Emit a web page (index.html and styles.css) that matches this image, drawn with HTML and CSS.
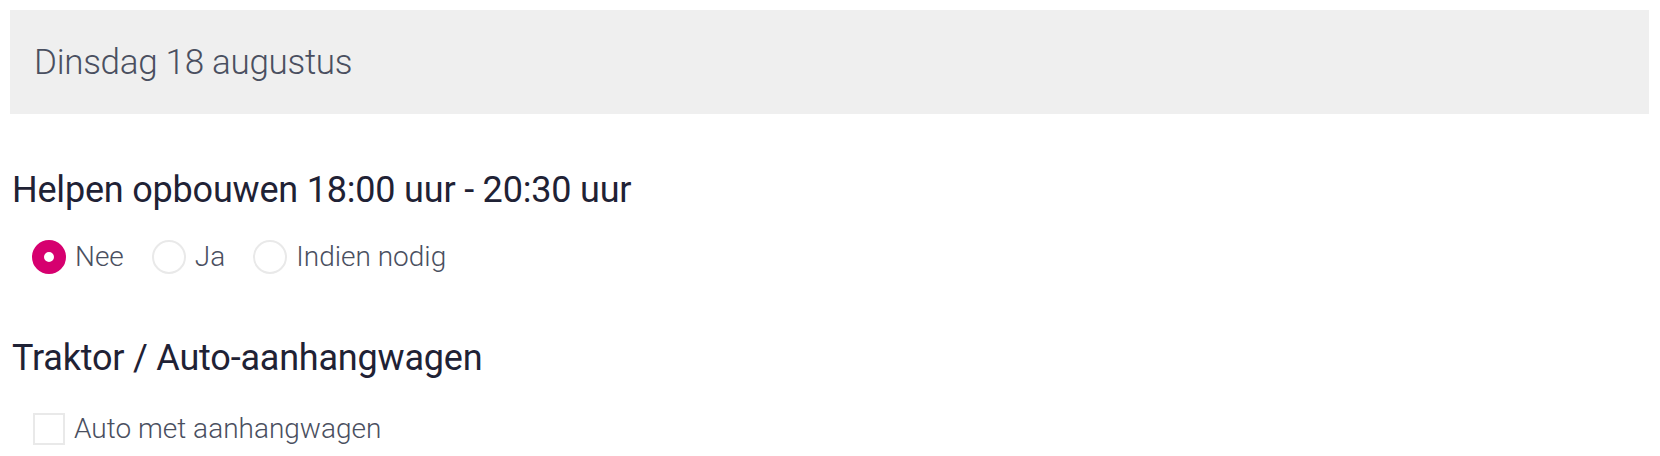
FILE: index.html
```html
<!DOCTYPE html>
<html lang="nl">
<head>
  <meta charset="UTF-8">
  <meta name="viewport" content="width=device-width, initial-scale=1.0">
  <title>Aanmelden vrijwilligers</title>
  <link rel="stylesheet" href="styles.css">
</head>
<body>
  <div class="day-header">Dinsdag 18 augustus</div>

  <div class="question">
    <h2>Helpen opbouwen 18:00 uur - 20:30 uur</h2>
    <div class="options">
      <label class="option"><input type="radio" name="opbouwen" value="nee" checked> Nee</label>
      <label class="option"><input type="radio" name="opbouwen" value="ja"> Ja</label>
      <label class="option"><input type="radio" name="opbouwen" value="nodig"> Indien nodig</label>
    </div>
  </div>

  <div class="question">
    <h2>Traktor / Auto-aanhangwagen</h2>
    <div class="options">
      <label class="option"><input type="checkbox" name="aanhangwagen"> Auto met aanhangwagen</label>
    </div>
  </div>
</body>
</html>
```

FILE: styles.css
```css
body {
  font-family: 'Roboto', 'Liberation Sans', sans-serif;
  background-color: #fff;
  margin: 10px 11px 10px 10px;
}

.day-header {
  background-color: #efefef;
  height: 104px;
  padding-left: 24px;
  display: flex;
  align-items: center;
  font-size: 35px;
  font-weight: 300;
  letter-spacing: -0.3px;
  color: #4a4f60;
}

.question {
  margin-top: 54px;
}

.question + .question {
  margin-top: 62px;
}

.question h2 {
  margin: 0 0 28px 2px;
  font-size: 36px;
  font-weight: 400;
  letter-spacing: -0.2px;
  line-height: 44px;
  color: #1f2235;
}

.question + .question h2 {
  margin-bottom: 32px;
}

.options {
  display: flex;
  gap: 28px;
  padding-left: 22px;
}

.option {
  display: flex;
  align-items: center;
  gap: 9px;
  font-size: 28px;
  line-height: 34px;
  font-weight: 300;
  color: #4a4f60;
}

.option input {
  appearance: none;
  -webkit-appearance: none;
  margin: 0;
  width: 34px;
  height: 34px;
  border: 2px solid #e9e9e9;
  background-color: #fff;
}

.option input[type="radio"] {
  border-radius: 50%;
}

.option input[type="radio"]:checked {
  border: 12px solid #d6006f;
}

.option input[type="checkbox"] {
  width: 32px;
  height: 32px;
  margin-left: 1px;
}
```
